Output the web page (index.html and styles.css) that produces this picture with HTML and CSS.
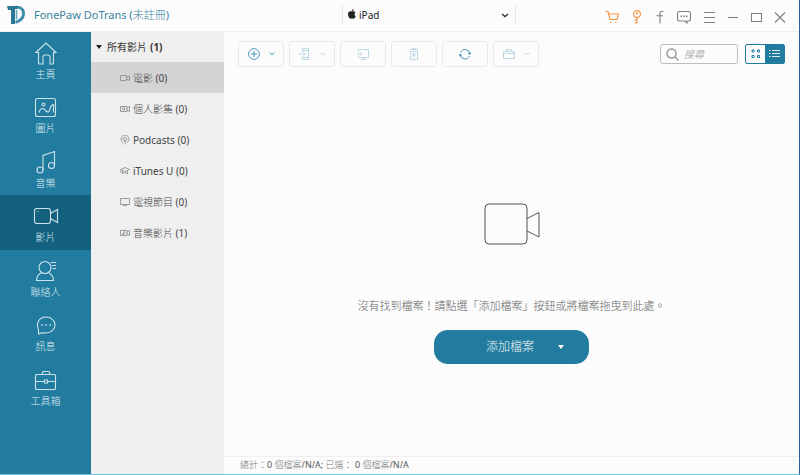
FILE: index.html
```html
<!DOCTYPE html>
<html lang="zh-Hant">
<head>
<meta charset="utf-8">
<meta name="viewport" content="width=device-width, initial-scale=1">
<title>FonePaw DoTrans</title>
<link rel="stylesheet" href="styles.css">
</head>
<body>
<div class="window">
  <header class="topbar">
    <div class="brand">
      <svg class="logo" width="20" height="20" viewBox="0 0 20 20" fill="none"><path d="M9 2.200c6.500-.8 9 3 8.500 7.300-.5 4-3.500 6.500-8 8" stroke="#3f8dac" stroke-width="2.800"/><path d="M10.500 5v9.500" stroke="#6aa9c1" stroke-width="1.600"/><path d="M1 1h10.500v3H9v15H5V5H2z" fill="#2b7896"/></svg>
      <h1 class="title">FonePaw DoTrans (<span>未註冊</span>)</h1>
    </div>
    <div class="device">
      <svg class="device-logo" width="10" height="10" viewBox="0 0 10 10" fill="#222"><path d="M5 2.600C3.600 1.900 1 2.100 1 5.300 1 7.700 2.600 10 3.800 9.700c.7-.3 1.500-.3 2.200 0C7.300 10 8.400 8.300 8.700 7.300 7.200 6.500 7.200 4.300 8.500 3.500 7.500 2 6 2.200 5 2.600zM4.800 2.200C4.800 1 5.600.2 6.600 0 6.700 1.200 5.900 2.100 4.800 2.200z"/></svg>
      <select class="device-select" aria-label="iPad"><option>iPad</option></select>
      <svg class="device-arrow" width="8" height="5" viewBox="0 0 8 5" fill="none" stroke="#333" stroke-width="1.400"><path d="M1 1l3 2.500L7 1"/></svg>
    </div>
    <nav class="actions">
      <button class="act orange" aria-label="購買"><svg width="14" height="14" viewBox="0 0 14 14"><path d="M.5 1.500H3l2 8h7L13.500 4H3.500M5 12.500h1.500M10 12.500h1.500"/></svg></button>
      <button class="act orange" aria-label="註冊"><svg width="14" height="14" viewBox="0 0 14 14"><circle cx="8" cy="4" r="3.400"/><circle cx="8" cy="3.300" r=".6"/><path d="M8 7.200V13.500M8 10h-2.500M8 12.700H5.500"/></svg></button>
      <button class="act" aria-label="Facebook"><svg width="14" height="14" viewBox="0 0 14 14"><path d="M10.500 1.500C8 .8 7 2 7 4v9.500M3.500 5.800H10"/></svg></button>
      <button class="act" aria-label="意見"><svg width="14" height="14" viewBox="0 0 14 14"><path d="M2.500 1.500h9q2 0 2 2v5.500q0 2-2 2H10v2l-2-2H2.500q-2 0-2-2V3.500q0-2 2-2z"/><path d="M3.500 6.300h1.500M6.300 6.300h1.500M9 6.300h1.500" stroke-width="1.600"/></svg></button>
      <button class="act" aria-label="選單"><svg width="14" height="14" viewBox="0 0 14 14"><path d="M3 2.500h11M3 7.500h11M3 12.500h11"/></svg></button>
      <button class="act" aria-label="最小化"><svg width="14" height="14" viewBox="0 0 14 14"><path d="M3 7.500h10"/></svg></button>
      <button class="act" aria-label="最大化"><svg width="14" height="14" viewBox="0 0 14 14"><path d="M2.500 3.500h10v8h-10z"/></svg></button>
      <button class="act" aria-label="關閉"><svg width="14" height="14" viewBox="0 0 14 14"><path d="M2 2.500l10 10M12 2.500l-10 10"/></svg></button>
    </nav>
  </header>

  <div class="body">
    <nav class="sidebar">
      <a class="side-item" href="#home"><svg width="26" height="26" viewBox="0 0 26 26"><path d="M3 12.500L13 3l10 9.500h-2.500V23q0 1-1 1H17v-7q0-2-2-2h-3q-2 0-2 2v7H6.500q-1 0-1-1V12.500z"/></svg><span>主頁</span></a>
      <a class="side-item" href="#photos"><svg width="26" height="26" viewBox="0 0 26 26"><rect x="2.500" y="4.500" width="20" height="18" rx="2"/><circle cx="10.500" cy="10.500" r="1.500"/><path d="M6 18.500c1-4 3.500-5 5.500-3s4 4 5 1 .5-5 4-6v8"/></svg><span>圖片</span></a>
      <a class="side-item" href="#music"><svg width="26" height="26" viewBox="0 0 26 26"><circle cx="7" cy="21" r="3"/><circle cx="18.500" cy="16.500" r="3"/><path d="M10 21V6.500L21.500 2.500v14"/></svg><span>音樂</span></a>
      <a class="side-item active" href="#videos"><svg width="26" height="26" viewBox="0 0 26 26"><rect x="1.500" y="5.500" width="16" height="15" rx="2.500"/><path d="M17.500 10.500L24.500 6.500v13l-7-4M4.500 8.500h1"/></svg><span>影片</span></a>
      <a class="side-item" href="#contacts"><svg width="26" height="26" viewBox="0 0 26 26"><circle cx="12" cy="9.500" r="6"/><path d="M8.500 14.500C5 16.500 3.500 19 3.500 22.500h17c0-3.500-1.500-6-5-8M18 4.500h5M19.500 7.500H23M19.500 10.500H23"/></svg><span>聯絡人</span></a>
      <a class="side-item" href="#messages"><svg width="26" height="26" viewBox="0 0 26 26"><path d="M5.500 22v-4.500c-3-6.500 1-12.500 7.500-12.500 5 0 9 3.500 9 8s-4 8-9 8c-2 0-3-.3-4.500-.3z"/><path d="M8 13h1.500M12.200 13h1.500M16.500 13H18" stroke-width="1.600"/></svg><span>訊息</span></a>
      <a class="side-item" href="#toolbox"><svg width="26" height="26" viewBox="0 0 26 26"><rect x="2.500" y="7.500" width="20" height="15" rx="1"/><path d="M9.500 7.500v-2q0-1 1-1h5q1 0 1 1v2M2.500 14.500h9M14.500 14.500h8M11.500 13h3v3h-3z"/></svg><span>工具箱</span></a>
    </nav>

    <aside class="library">
      <h2 class="lib-head"><span class="tri"></span>所有影片 <b>(1)</b></h2>
      <a class="lib-item selected" href="#movies"><svg width="10" height="10" viewBox="0 0 10 10"><path d="M.5 2.500h6v5h-6zM6.500 4.500l3-1.500v4.500l-3-1.500"/></svg><span><i>電影</i> (0)</span></a>
      <a class="lib-item" href="#homevideos"><svg width="10" height="10" viewBox="0 0 10 10"><path d="M.5 2.500h6.500v5H.5zM7 4l2.500-1.500v5L7 6"/><circle cx="3.700" cy="5" r="1.300"/></svg><span><i>個人影集</i> (0)</span></a>
      <a class="lib-item" href="#podcasts"><svg width="10" height="10" viewBox="0 0 10 10"><path d="M3 7.500a4 4 0 1 1 4 0M3.500 5.500a2 2 0 1 1 3 0M5 4v5.500M4 6h2"/></svg><span>Podcasts (0)</span></a>
      <a class="lib-item" href="#itunesu"><svg width="10" height="10" viewBox="0 0 10 10"><path d="M.5 3.500L5 1.500l4.500 2L5 5.500zM2.500 5v2.500L5 6.500l2.500 1.500V5M1 4v3"/></svg><span>iTunes U (0)</span></a>
      <a class="lib-item" href="#tv"><svg width="10" height="10" viewBox="0 0 10 10"><path d="M.5 1.500h9v6h-9zM3 8.500h4"/></svg><span><i>電視節目</i> (0)</span></a>
      <a class="lib-item" href="#mv"><svg width="10" height="10" viewBox="0 0 10 10"><path d="M.5 2.500h6.500v5H.5zM7 4l2.500-1.500v5L7 6M4 6.500V3.500l1.500 1"/><circle cx="3.200" cy="6" r=".7"/></svg><span><i>音樂影片</i> (1)</span></a>
    </aside>

    <main class="content">
      <div class="toolbar">
        <button class="tool" aria-label="添加"><svg width="12" height="12" viewBox="0 0 12 12"><circle cx="6" cy="6" r="5.400"/><path d="M6 3v6M3 6h6"/></svg><svg class="chev" width="6" height="4" viewBox="0 0 6 4"><path d="M.5.8L3 2.800 5.500.8"/></svg></button>
        <button class="tool" aria-label="匯出到裝置" disabled><svg width="12" height="12" viewBox="0 0 12 12"><path d="M3.500 4V.5h6v11h-6V8M3.500 2.500h6M3.500 9.500h6M0 6h6M4.500 4.500L6 6 4.500 7.500"/></svg><svg class="chev" width="6" height="4" viewBox="0 0 6 4"><path d="M.5.8L3 2.800 5.500.8"/></svg></button>
        <button class="tool" aria-label="匯出到電腦" disabled><svg width="12" height="12" viewBox="0 0 12 12"><path d="M1.500 4V1.500h10v8h-10V8M6.500 9.500v2M4 11.500h5M0 6h5M3.500 4.500L5 6 3.500 7.500"/></svg></button>
        <button class="tool" aria-label="刪除" disabled><svg width="12" height="12" viewBox="0 0 12 12"><path d="M2 1.500h8M4.500 1.500v-1h3v1M2.500 3.500h7v8h-7zM5 9.500v-4h2v2H5"/></svg></button>
        <button class="tool" aria-label="重新整理"><svg width="12" height="12" viewBox="0 0 12 12"><path d="M1.500 4.500a5 5 0 0 1 9.500 1.500M10.500 8A5 5 0 0 1 1 6.500M9 5l2 1.500L12 4.500M0 8l1-1.800L3 7.500"/></svg></button>
        <button class="tool" aria-label="工具箱" disabled><svg width="12" height="12" viewBox="0 0 12 12"><path d="M.5 3.500h11v7H.5zM3.500 3.500v-2h5v2M.5 5.500h11"/></svg><svg class="chev" width="6" height="4" viewBox="0 0 6 4"><path d="M.5.8L3 2.800 5.500.8"/></svg></button>
        <label class="search">
          <svg width="13" height="13" viewBox="0 0 13 13" fill="none" stroke="#999" stroke-width="1.500"><circle cx="5.500" cy="5.500" r="4.500"/><path d="M8.800 8.800l3.700 3.700"/></svg>
          <input type="search" placeholder="搜尋" aria-label="搜尋">
        </label>
        <div class="views">
          <button class="view" aria-label="縮圖"><svg width="10" height="10" viewBox="0 0 10 10"><path d="M1 1h2v2H1zM6.500 1h2v2h-2zM1 6.500h2v2H1zM6.500 6.500h2v2h-2z"/></svg></button>
          <button class="view on" aria-label="清單"><svg width="12" height="10" viewBox="0 0 12 10"><path d="M0 1.500h1.500M0 4.500h1.500M0 7.500h1.500M3 1.500h8M3 4.500h8M3 7.500h8"/></svg></button>
        </div>
      </div>
      <section class="empty">
        <svg width="56" height="42" viewBox="0 0 56 42" fill="none" stroke="#555"><rect x="1" y="1" width="42" height="40" rx="4"/><path d="M43 15.500L55 9.500v24.500l-12-6"/></svg>
        <p class="hint">沒有找到檔案！請點選「添加檔案」按鈕或將檔案拖曳到此處。</p>
        <button class="add"><span>添加檔案</span><span class="add-tri"></span></button>
      </section>
      <footer class="status"><span>總計：</span>0 <span>個檔案</span>/N/A; <span>已選：</span> 0 <span>個檔案</span>/N/A</footer>
    </main>
  </div>
</div>
</body>
</html>
```
FILE: styles.css
```css
* { box-sizing: border-box; }

body {
  margin: 0;
  font-family: "Noto Sans", "Noto Sans CJK TC", sans-serif;
  font-size: 10px;
  line-height: 16px;
  color: #444;
  background: #fcfcfc;
}

button, input, select { font: inherit; color: inherit; margin: 0; }
button { padding: 0; border: 0; background: none; }
svg { display: block; flex: none; }
a { color: inherit; text-decoration: none; }

.window {
  display: flex;
  flex-direction: column;
  min-height: 100vh;
  border-right: 1px solid #2d5f9e;
  border-bottom: 1px solid #6fc4e2;
}

/* Top bar */
.topbar {
  display: flex;
  height: 32px;
  border-bottom: 1px solid #f0f0f0;
}
.brand {
  display: flex;
  align-items: center;
  gap: 8px;
  width: 342px;
  padding: 0 0 2px 6px;
}
.title {
  margin: 0;
  font-size: 11px;
  font-weight: 400;
  color: #3b83a0;
}
.title span { font-weight: 300; }
.device {
  position: relative;
  width: 174px;
  height: 20px;
  margin-top: 5px;
  border: solid #e8e8e8;
  border-width: 0 1px;
}
.device-select {
  display: block;
  width: 100%;
  height: 20px;
  padding: 0 16px;
  border: 0;
  background: none;
  appearance: none;
  color: #222;
}
.device-logo { position: absolute; left: 4px; top: 4px; }
.device-arrow { position: absolute; right: 6px; top: 8px; }
.actions {
  display: flex;
  align-items: center;
  gap: 10px;
  margin-left: auto;
  padding: 3px 12px 0 0;
}
.act svg { fill: none; stroke: #808080; stroke-width: 1.1; }
.act.orange svg { stroke: #f5923e; }

.body { display: flex; flex: 1; }

/* Section navigation */
.sidebar {
  display: grid;
  grid-template-rows: repeat(7, 1fr);
  align-self: stretch;
  width: 91px;
  padding-bottom: 61px;
  background: #227c9f;
}
.side-item {
  display: flex;
  flex-direction: column;
  align-items: center;
  padding-top: 8px;
  font-weight: 300;
  color: #dcebf1;
}
.side-item svg { fill: none; stroke: #cde3eb; stroke-width: 1.1; }
.side-item.active { background: #14617f; }

/* Library list */
.library { width: 133px; background: #efefef; }
.lib-head {
  display: flex;
  align-items: center;
  gap: 3px;
  height: 30px;
  margin: 0;
  padding-left: 5px;
  font-size: 10px;
  font-weight: 400;
  color: #333;
}
.tri {
  margin-right: 2px;
  border: solid transparent;
  border-width: 4px 3px 0;
  border-top-color: #222;
}
.lib-item {
  display: flex;
  align-items: center;
  gap: 3px;
  height: 31px;
  padding-left: 29px;
}
.lib-item i { font-style: normal; font-weight: 300; }
.lib-item svg { fill: none; stroke: #888; stroke-width: .8; }
.lib-item.selected { background: #d4d4d4; }

/* Main area */
.content { display: flex; flex: 1; flex-direction: column; min-width: 0; }
.toolbar {
  display: flex;
  align-items: center;
  gap: 5px;
  padding: 9px 14px 0;
}
.tool {
  display: flex;
  align-items: center;
  justify-content: center;
  gap: 9px;
  width: 46px;
  height: 26px;
  border: 1px solid #e8eaeb;
  border-radius: 3px;
}
.tool svg { fill: none; stroke: #4a98b8; }
.tool:disabled svg { stroke: #bcd8e3; }
.search {
  display: flex;
  align-items: center;
  gap: 5px;
  width: 78px;
  height: 20px;
  margin-left: auto;
  padding-left: 5px;
  border: 1px solid #bdbdbd;
  border-radius: 3px;
}
.search input {
  min-width: 0;
  width: 100%;
  padding: 0;
  border: 0;
  background: none;
  outline: 0;
}
.search input::placeholder { color: #b5b5b5; font-style: italic; }
.views {
  display: flex;
  height: 20px;
  margin-left: 2px;
  border: 1px solid #227c9f;
  border-radius: 2px;
}
.view {
  display: flex;
  align-items: center;
  justify-content: center;
  width: 19px;
}
.view svg { fill: none; stroke: #227c9f; }
.view.on { background: #227c9f; }
.view.on svg { stroke: #e3eff4; }

.empty {
  display: flex;
  flex: 1;
  flex-direction: column;
  align-items: center;
  justify-content: center;
  padding-top: 44px;
}
.hint { margin: 53px 0 16px; font-size: 11px; font-weight: 300; color: #666; }
.add {
  display: flex;
  align-items: center;
  justify-content: center;
  gap: 24px;
  width: 155px;
  height: 34px;
  padding-left: 27px;
  border-radius: 14px;
  background: #227c9f;
  font-size: 12px;
  font-weight: 300;
  color: #f2f8fa;
}
.add-tri {
  border: solid transparent;
  border-width: 4px 3px 0;
  border-top-color: #fff;
}
.status {
  height: 18px;
  padding-left: 16px;
  border-top: 1px solid #f0f0f0;
  font-size: 9px;
  color: #555;
}
.status span { font-weight: 300; color: #777; }
```
